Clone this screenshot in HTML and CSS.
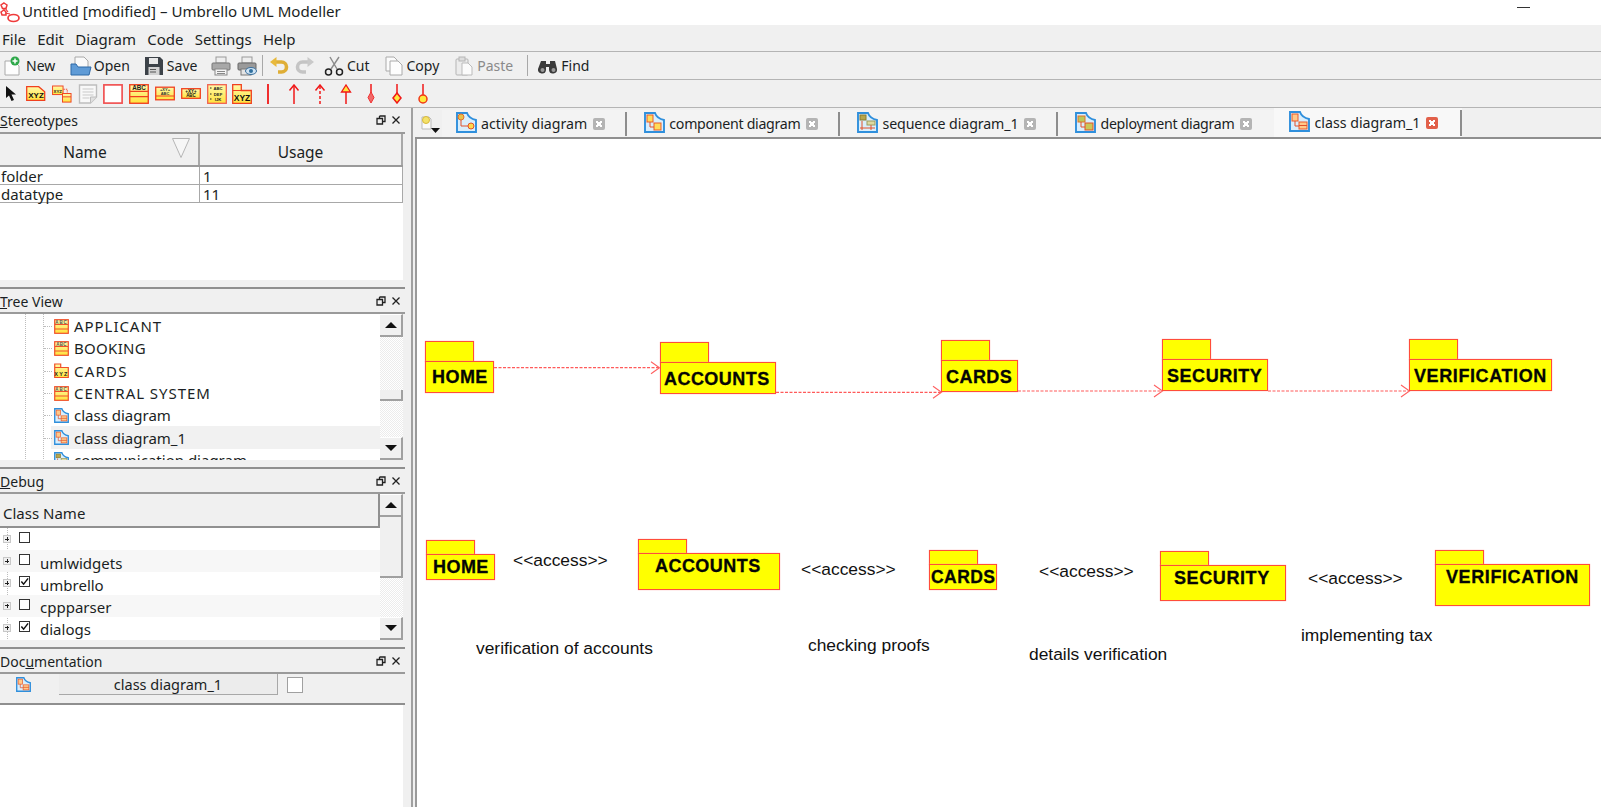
FILE: index.html
```html
<!DOCTYPE html>
<html lang="en">
<head>
<meta charset="utf-8">
<title>Untitled [modified] – Umbrello UML Modeller</title>
<link rel="stylesheet" href="styles.css">
</head>
<body>
<svg class="defs" width="0" height="0" aria-hidden="true">
  <defs>
    <linearGradient id="yl" x1="0" y1="0" x2="0" y2="1"><stop offset="0" stop-color="#fff9a8"/><stop offset="1" stop-color="#ffe23c"/></linearGradient>
    <symbol id="d-base" viewBox="0 0 21 21"><path d="M1 1h10c1 3 4 6 9 7v12H1z" fill="#d9eefc" stroke="#2f8fdc" stroke-width="1.9"/></symbol>
    <symbol id="d-activity" viewBox="0 0 21 21"><use href="#d-base" width="21" height="21"/><circle cx="5" cy="5" r="3" fill="#e8c24a" stroke="#e2702a"/><path d="M5 8v6h7" fill="none" stroke="#e2502a"/><circle cx="15" cy="14" r="3" fill="#ffd94a" stroke="#e2502a"/></symbol>
    <symbol id="d-component" viewBox="0 0 21 21"><use href="#d-base" width="21" height="21"/><rect x="3" y="3" width="6" height="7" fill="#ffdc5a" stroke="#ea5a2a"/><rect x="10" y="11" width="7" height="7" fill="#ffdc5a" stroke="#ea5a2a"/><path d="M6 10v5h4" fill="none" stroke="#e2502a"/></symbol>
    <symbol id="d-sequence" viewBox="0 0 21 21"><use href="#d-base" width="21" height="21"/><rect x="3" y="3" width="6" height="5" fill="#b7a64a" stroke="#8a7a30"/><rect x="10" y="9" width="8" height="4" fill="#dcd9a0" stroke="#9a9a60"/><path d="M3 16h15M5 9v9M14 13v5" stroke="#e2502a" fill="none"/></symbol>
    <symbol id="d-deployment" viewBox="0 0 21 21"><use href="#d-base" width="21" height="21"/><rect x="3" y="4" width="7" height="6" fill="#b9c85a" stroke="#e2702a"/><rect x="10" y="11" width="8" height="7" fill="#c9c85a" stroke="#e2502a"/><path d="M6 10v5h4" fill="none" stroke="#e2502a"/></symbol>
    <symbol id="d-class" viewBox="0 0 21 21"><use href="#d-base" width="21" height="21"/><rect x="3" y="3" width="6" height="7" fill="#ffc98a" stroke="#ea5a2a"/><rect x="10" y="11" width="8" height="7" fill="#ffc98a" stroke="#ea5a2a"/><path d="M10 14.5h8M6 10v5h4" fill="none" stroke="#e2502a"/></symbol>
    <symbol id="c-class" viewBox="0 0 15 15"><rect x=".7" y=".7" width="13.6" height="13.6" fill="url(#yl)" stroke="#f0502a" stroke-width="1.2"/><path d="M1 5.5h13M1 10h13" stroke="#f0502a"/><text x="7.5" y="4.7" font-size="4.5" font-family="Liberation Sans" font-weight="700" text-anchor="middle" fill="#555">ABC</text></symbol>
    <symbol id="c-pkg" viewBox="0 0 15 15"><path d="M.7 1h6v3.5h7.6v10H.7z" fill="url(#yl)" stroke="#f0502a" stroke-width="1.2"/><path d="M1 4.5h6" stroke="#f0502a"/><text x="7.5" y="12.5" font-size="5.5" font-family="Liberation Sans" font-weight="700" text-anchor="middle" fill="#222">XYZ</text></symbol>
    <symbol id="float" viewBox="0 0 10 10"><path d="M3.5 1h5.5v5.5h-2M1 3.5h5.5v5.5h-5.500z M3.500 1v2.500" fill="none" stroke="#222" stroke-width="1.300"/></symbol>
    <symbol id="close" viewBox="0 0 10 10"><path d="M1.500 1.500l7 7M8.500 1.500l-7 7" stroke="#222" stroke-width="1.300"/></symbol>
  </defs>
</svg>

<header class="titlebar">
  <svg class="app-icon" viewBox="0 0 20 21"><path d="M4 1l3 2-1 3.500H2.500L1 3z M1 10l3-2 2 2v3H2z" fill="#fff" stroke="#ef3b3b" stroke-width="1.500"/><path d="M5 6l3 4M5 11l5 1" stroke="#ef3b3b" stroke-width="1.200"/><ellipse cx="13.500" cy="16" rx="5.500" ry="3.500" fill="#fff" stroke="#ef3b3b" stroke-width="1.700"/></svg>
  <span class="title-text">Untitled [modified] – Umbrello UML Modeller</span>
  <span class="win-min"></span>
</header>

<nav class="menubar">
  <span>File</span><span>Edit</span><span>Diagram</span><span>Code</span><span>Settings</span><span>Help</span>
</nav>

<div class="toolbar t1">
  <div class="tbtn"><svg class="ico" viewBox="0 0 20 20"><path d="M2 5h9l5 5v9H2z" fill="#fdfdfd" stroke="#aaa"/><circle cx="12" cy="5" r="4.500" fill="#2ea84a"/><path d="M12 2.500v5M9.500 5h5" stroke="#fff" stroke-width="1.500"/></svg><span>New</span></div>
  <div class="tbtn b-open"><svg class="ico ico-w" viewBox="0 0 22 20"><path d="M5 1h9l4 4v7H5z" fill="#fafafa" stroke="#a8a8a8"/><path d="M1 8h5l2 3h13l-2 8H1z" fill="#5f9bd6" stroke="#2f6aa8"/></svg><span>Open</span></div>
  <div class="tbtn b-save"><svg class="ico" viewBox="0 0 20 20"><path d="M1 1h15l3 3v15H1z" fill="#3c4248"/><rect x="5" y="2" width="9" height="6" fill="#e8e8e8"/><rect x="4.500" y="11" width="11" height="8" fill="#d2d2d2"/><rect x="6" y="13" width="6" height="1" fill="#555"/><rect x="6" y="15.500" width="6" height="1" fill="#555"/></svg><span>Save</span></div>
  <div class="tbtn solo"><svg class="ico" viewBox="0 0 20 20"><rect x="5" y="1" width="10" height="6" fill="#eee" stroke="#999"/><rect x="1" y="7" width="18" height="7" rx="1" fill="#a8a8a8" stroke="#777"/><rect x="4" y="13" width="12" height="6" fill="#f4f4f4" stroke="#888"/><path d="M6 15.500h8M6 17.500h8" stroke="#888"/></svg></div>
  <div class="tbtn solo last"><svg class="ico" viewBox="0 0 20 20"><rect x="5" y="1" width="10" height="6" fill="#eee" stroke="#999"/><rect x="1" y="7" width="18" height="7" rx="1" fill="#9a9a9a" stroke="#666"/><rect x="4" y="13" width="10" height="6" fill="#e4e4e4" stroke="#777"/><ellipse cx="14" cy="15" rx="5.500" ry="3.500" fill="#cfe3f3" stroke="#3a6f9c"/><circle cx="14" cy="15" r="2" fill="#2f6f9f"/></svg></div>
  <span class="tsep"></span>
  <div class="tbtn solo"><svg class="ico" viewBox="0 0 20 20"><path d="M5 6h7.500a5 5 0 0 1 0 10H9" fill="none" stroke="#dfae36" stroke-width="3.600"/><path d="M7.500 1L1 6l6.500 5z" fill="#e8b93c"/></svg></div>
  <div class="tbtn solo gapcut"><svg class="ico" viewBox="0 0 20 20"><path d="M15 6H7.500a5 5 0 0 0 0 10H11" fill="none" stroke="#c4c4c4" stroke-width="3.600"/><path d="M12.500 1L19 6l-6.500 5z" fill="#c9c9c9"/></svg></div>
  <div class="tbtn b-cut"><svg class="ico" viewBox="0 0 20 20"><path d="M6 1l7 12M15 1L7 13" stroke="#8a8a8a" stroke-width="1.400" fill="none"/><circle cx="4.500" cy="16" r="3" fill="none" stroke="#222" stroke-width="1.500"/><circle cx="15.500" cy="16" r="3" fill="none" stroke="#222" stroke-width="1.500"/></svg><span>Cut</span></div>
  <div class="tbtn"><svg class="ico ico-n" viewBox="0 0 18 20"><path d="M1 1h8l3 3v11H1z" fill="#fbfbfb" stroke="#aaa"/><path d="M5 5h8l4 4v10H5z" fill="#fdfdfd" stroke="#aaa"/></svg><span>Copy</span></div>
  <div class="tbtn off"><svg class="ico" viewBox="0 0 20 20"><rect x="2" y="3" width="12" height="16" rx="1" fill="#ececec" stroke="#b5b5b5"/><rect x="5" y="1" width="6" height="4" fill="#ddd" stroke="#b5b5b5"/><path d="M8 7h6l4 4v8H8z" fill="#fbfbfb" stroke="#bbb"/></svg><span>Paste</span></div>
  <span class="tsep sep-find"></span>
  <div class="tbtn"><svg class="ico" viewBox="0 0 20 20"><path d="M3 5h5v3h4V5h5l2 8a4 4 0 1 1-8 1v-3H8v3a4 4 0 1 1-8-1z" fill="#3a3a3a"/><circle cx="4.500" cy="14" r="2" fill="#9a9a9a"/><circle cx="15.500" cy="14" r="2" fill="#9a9a9a"/></svg><span>Find</span></div>
</div>

<div class="toolbar t2">
  <span class="tool tool-first"><svg class="sel" viewBox="0 0 11 16"><path d="M1 0v12l3-2.500L6.500 15l2.500-1-2.500-5.500H11z" fill="#111"/></svg></span>
  <span class="tool"><svg class="ti" viewBox="0 0 20 15"><path d="M.7.700h12l6 5v8.600H.7z" fill="url(#yl)" stroke="#f0401f" stroke-width="1.300"/><text x="10" y="12" font-size="8" font-family="Liberation Sans" font-weight="700" text-anchor="middle" fill="#111">XYZ</text></svg></span>
  <span class="tool"><svg class="ti ti-t" viewBox="0 0 21 18"><rect x=".6" y=".6" width="11" height="9" fill="url(#yl)" stroke="#f0401f"/><text x="6" y="7.500" font-size="4.500" font-family="Liberation Sans" font-weight="700" text-anchor="middle" fill="#222">XYZ</text><path d="M12 4h4v4" fill="none" stroke="#f0401f" stroke-dasharray="1.500 1"/><rect x="11" y="8.500" width="9" height="9" fill="url(#yl)" stroke="#f0401f"/><path d="M11 12h9" stroke="#f0401f"/></svg></span>
  <span class="tool"><svg class="ti ti-t" viewBox="0 0 19 20"><path d="M1 1h17v12l-6 6H1z" fill="#f8f8f8" stroke="#bdbdbd" stroke-width="1.400"/><path d="M4 5h11M4 8h11M4 11h11M4 14h7" stroke="#c9c9c9"/><path d="M12 19v-6h6" fill="#e0e0e0" stroke="#bdbdbd"/></svg></span>
  <span class="tool"><svg class="ti ti-t" viewBox="0 0 18 18"><rect x=".8" y=".8" width="16.400" height="16.400" fill="#fff" stroke="#f05050" stroke-width="1.500"/></svg></span>
  <span class="tool"><svg class="ti ti-t" viewBox="0 0 19 19"><rect x=".7" y=".7" width="17.600" height="17.600" fill="url(#yl)" stroke="#f0401f" stroke-width="1.300"/><path d="M1 7h17M1 12h17" stroke="#f0401f"/><text x="9.500" y="6" font-size="6" font-family="Liberation Sans" font-weight="700" text-anchor="middle" fill="#222">ABC</text></svg></span>
  <span class="tool"><svg class="ti" viewBox="0 0 20 14"><rect x=".7" y=".7" width="18.600" height="12.600" fill="url(#yl)" stroke="#f0401f" stroke-width="1.300"/><path d="M1 9.500h18" stroke="#f0401f"/><text x="10" y="4.500" font-size="4" font-family="Liberation Sans" font-weight="700" text-anchor="middle" fill="#333">+XY+</text><text x="10" y="8.500" font-size="4" font-family="Liberation Sans" font-weight="700" text-anchor="middle" fill="#333">ABC</text></svg></span>
  <span class="tool"><svg class="ti ti-s" viewBox="0 0 20 11"><rect x=".7" y=".7" width="18.600" height="9.600" fill="url(#yl)" stroke="#f0401f" stroke-width="1.300"/><text x="10" y="4.800" font-size="4.500" font-family="Liberation Sans" font-weight="700" text-anchor="middle" fill="#111">+XY+</text><text x="10" y="9.300" font-size="4.500" font-family="Liberation Sans" font-weight="700" text-anchor="middle" fill="#111">ABC</text></svg></span>
  <span class="tool"><svg class="ti ti-t" viewBox="0 0 20 20"><rect x=".7" y=".7" width="18.600" height="18.600" fill="url(#yl)" stroke="#f0604f" stroke-width="1.300"/><text x="11" y="6" font-size="4.200" font-family="Liberation Sans" font-weight="700" text-anchor="middle" fill="#222">ABC</text><text x="11" y="11.500" font-size="4.200" font-family="Liberation Sans" font-weight="700" text-anchor="middle" fill="#222">DEF</text><text x="11" y="17" font-size="4.200" font-family="Liberation Sans" font-weight="700" text-anchor="middle" fill="#222">IJK</text><path d="M3 4h1.500M3 10h1.500M3 15h1.500" stroke="#222"/></svg></span>
  <span class="tool"><svg class="ti ti-t" viewBox="0 0 20 20"><path d="M.7.700h8.600v5.800h10v13H.7z" fill="url(#yl)" stroke="#f0401f" stroke-width="1.300"/><path d="M1 6.500h8" stroke="#f0401f"/><text x="10" y="16.500" font-size="8.500" font-family="Liberation Sans" font-weight="700" text-anchor="middle" fill="#111">XYZ</text></svg></span>
  <span class="tool"><svg class="ra" viewBox="0 0 14 20"><path d="M7 0v20" stroke="#f01818" stroke-width="1.800"/></svg></span>
  <span class="tool"><svg class="ra" viewBox="0 0 14 20"><path d="M7 2v18" stroke="#f01818" stroke-width="1.500"/><path d="M2.500 6.500L7 1l4.500 5.500" fill="none" stroke="#f01818" stroke-width="1.500"/></svg></span>
  <span class="tool"><svg class="ra" viewBox="0 0 14 20"><path d="M7 2v18" stroke="#f01818" stroke-width="1.500" stroke-dasharray="3 2"/><path d="M2.500 6.500L7 1l4.500 5.500" fill="none" stroke="#f01818" stroke-width="1.500"/></svg></span>
  <span class="tool"><svg class="ra" viewBox="0 0 14 20"><path d="M7 8v12" stroke="#f01818" stroke-width="1.500"/><path d="M2.500 8L7 1l4.500 7z" fill="#ffe93c" stroke="#f01818" stroke-width="1.300"/></svg></span>
  <span class="tool"><svg class="ra" viewBox="0 0 14 20"><path d="M7 0v9" stroke="#f01818" stroke-width="1.500"/><path d="M7 8l3 5.500-3 5.500-3-5.500z" fill="#f06a6a" stroke="#f03030"/></svg></span>
  <span class="tool"><svg class="ra" viewBox="0 0 14 20"><path d="M7 0v9" stroke="#f01818" stroke-width="1.500"/><path d="M7 9l4 5-4 5-4-5z" fill="#ffe93c" stroke="#f01818" stroke-width="1.500"/></svg></span>
  <span class="tool"><svg class="ra" viewBox="0 0 14 20"><path d="M7 0v11" stroke="#f01818" stroke-width="1.500"/><circle cx="7" cy="15" r="4" fill="#ffe93c" stroke="#f03818" stroke-width="1.500"/></svg></span>
</div>

<main class="main">
  <aside class="sidebar">
    <section class="dock dock-stereo">
      <div class="dock-head head-tall"><span><u>S</u>tereotypes</span><span class="dock-btns"><svg><use href="#float"/></svg><svg><use href="#close"/></svg></span></div>
      <div class="stereo-body">
        <div class="st-head"><div class="st-h st-name">Name<svg class="sort" viewBox="0 0 18 20"><path d="M.5.500h17L9 19.500z" fill="#f6f6f6" stroke="#b5b5b5"/></svg></div><div class="st-h st-usage">Usage</div></div>
        <div class="st-row"><div class="st-c1">folder</div><div class="st-c2">1</div></div>
        <div class="st-row"><div class="st-c1">datatype</div><div class="st-c2">11</div></div>
      </div>
    </section>

    <section class="dock dock-tree">
      <div class="dock-head"><span><u>T</u>ree View</span><span class="dock-btns"><svg><use href="#float"/></svg><svg><use href="#close"/></svg></span></div>
      <div class="list-wrap">
        <div class="tree-list">
          <div class="tree-row caps"><svg class="ci"><use href="#c-class"/></svg>APPLICANT</div>
          <div class="tree-row caps-s"><svg class="ci"><use href="#c-class"/></svg>BOOKING</div>
          <div class="tree-row caps-l"><svg class="ci"><use href="#c-pkg"/></svg>CARDS</div>
          <div class="tree-row caps"><svg class="ci"><use href="#c-class"/></svg>CENTRAL SYSTEM</div>
          <div class="tree-row"><svg class="ci"><use href="#d-class"/></svg>class diagram</div>
          <div class="tree-row on"><svg class="ci"><use href="#d-class"/></svg>class diagram_1</div>
          <div class="tree-row"><svg class="ci"><use href="#d-sequence"/></svg>communication diagram</div>
        </div>
        <div class="vscroll">
          <div class="sb-btn"><i class="up"></i></div>
          <div class="sb-track"><div class="sb-gap g-tree"></div><div class="sb-thumb th-tree"></div><div class="sb-gap g-tree2"></div></div>
          <div class="sb-btn"><i class="down"></i></div>
        </div>
      </div>
    </section>

    <section class="dock dock-debug">
      <div class="dock-head"><span><u>D</u>ebug</span><span class="dock-btns"><svg><use href="#float"/></svg><svg><use href="#close"/></svg></span></div>
      <div class="list-wrap">
        <div class="debug-list">
          <div class="debug-head">Class Name</div>
          <div class="debug-row"><i class="exp"></i><i class="cb"></i></div>
          <div class="debug-row alt"><i class="exp"></i><i class="cb"></i><span>umlwidgets</span></div>
          <div class="debug-row"><i class="exp"></i><i class="cb"><svg viewBox="0 0 10 10"><path d="M1.500 5l2.500 3 5-6.500" fill="none" stroke="#111" stroke-width="1.600"/></svg></i><span>umbrello</span></div>
          <div class="debug-row alt"><i class="exp"></i><i class="cb"></i><span>cppparser</span></div>
          <div class="debug-row"><i class="exp"></i><i class="cb"><svg viewBox="0 0 10 10"><path d="M1.500 5l2.500 3 5-6.500" fill="none" stroke="#111" stroke-width="1.600"/></svg></i><span>dialogs</span></div>
        </div>
        <div class="vscroll vscroll-debug">
          <div class="sb-btn"><i class="up"></i></div>
          <div class="sb-track"><div class="sb-thumb th-debug"></div><div class="sb-gap g-debug"></div></div>
          <div class="sb-btn"><i class="down"></i></div>
        </div>
      </div>
    </section>

    <section class="dock dock-doc">
      <div class="dock-head"><span>Doc<u>u</u>mentation</span><span class="dock-btns"><svg><use href="#float"/></svg><svg><use href="#close"/></svg></span></div>
      <div class="doc-row"><svg class="ci doc-ic"><use href="#d-class"/></svg><div class="doc-btn">class diagram_1</div><i class="doc-cb"></i></div>
    </section>
    <div class="doc-fill"></div>
  </aside>

  <section class="workspace">
    <div class="tabstrip">
      <div class="tab-menu"><svg viewBox="0 0 20 20"><path d="M1 3h7l2 2v10H1z" fill="#fafafa" stroke="#bbb"/><circle cx="5" cy="6" r="3.500" fill="#f4e26a" stroke="#d8b83a"/><path d="M10 14h9l-4.500 5z" fill="#111"/></svg></div>
      <div class="tab tab-first"><svg class="ti-d"><use href="#d-activity"/></svg><span>activity diagram</span><i class="tab-x"></i></div>
      <div class="tab tight"><svg class="ti-d"><use href="#d-component"/></svg><span>component diagram</span><i class="tab-x"></i></div>
      <div class="tab snug"><svg class="ti-d"><use href="#d-sequence"/></svg><span>sequence diagram_1</span><i class="tab-x"></i></div>
      <div class="tab tab-nosep tight"><svg class="ti-d"><use href="#d-deployment"/></svg><span>deployment diagram</span><i class="tab-x"></i></div>
      <div class="tab tab-active"><svg class="ti-d"><use href="#d-class"/></svg><span>class diagram_1</span><i class="tab-x"></i></div>
    </div>
    <div class="canvas">
      <svg class="links" viewBox="0 0 1184 668">
        <g class="dash">
          <path d="M77 228.700H242"/>
          <path d="M359 253.300H524"/>
          <path d="M601 252H745"/>
          <path d="M851 252H992"/>
        </g>
        <g class="head">
          <path d="M234 222.700l8.500 6-8.500 6"/>
          <path d="M516 247.300l8.500 6-8.500 6"/>
          <path d="M737 246l8.500 6-8.500 6"/>
          <path d="M984 246l8.500 6-8.500 6"/>
        </g>
      </svg>

      <div class="pkg p1"><div class="pkg-tab"></div><div class="pkg-body"><span>HOME</span></div></div>
      <div class="pkg p2"><div class="pkg-tab"></div><div class="pkg-body"><span>ACCOUNTS</span></div></div>
      <div class="pkg p3"><div class="pkg-tab"></div><div class="pkg-body"><span>CARDS</span></div></div>
      <div class="pkg p4"><div class="pkg-tab"></div><div class="pkg-body"><span>SECURITY</span></div></div>
      <div class="pkg p5"><div class="pkg-tab"></div><div class="pkg-body"><span>VERIFICATION</span></div></div>

      <div class="pkg q1"><div class="pkg-tab tab-low"></div><div class="pkg-body"><span>HOME</span></div></div>
      <div class="pkg q2"><div class="pkg-tab tab-low"></div><div class="pkg-body"><span>ACCOUNTS</span></div></div>
      <div class="pkg q3"><div class="pkg-tab tab-low"></div><div class="pkg-body"><span>CARDS</span></div></div>
      <div class="pkg q4"><div class="pkg-tab tab-low"></div><div class="pkg-body"><span>SECURITY</span></div></div>
      <div class="pkg q5"><div class="pkg-tab tab-low"></div><div class="pkg-body"><span>VERIFICATION</span></div></div>

      <span class="lbl a1">&lt;&lt;access&gt;&gt;</span>
      <span class="lbl a2">&lt;&lt;access&gt;&gt;</span>
      <span class="lbl a3">&lt;&lt;access&gt;&gt;</span>
      <span class="lbl a4">&lt;&lt;access&gt;&gt;</span>
      <span class="lbl b1">verification of accounts</span>
      <span class="lbl b2">checking proofs</span>
      <span class="lbl b3">details verification</span>
      <span class="lbl b4">implementing tax</span>
    </div>
  </section>
</main>
</body>
</html>
```
FILE: styles.css
```css
* { box-sizing: border-box; }
html, body { margin: 0; padding: 0; }
body {
  width: 1601px;
  height: 807px;
  overflow: hidden;
  display: flex;
  flex-direction: column;
  background: #f0f0f0;
  color: #1b1f24;
  font-family: "Noto Sans", "Open Sans", sans-serif;
  font-size: 14.5px;
}
.defs { position: absolute; }
i { display: block; font-style: normal; }

.titlebar {
  height: 25px;
  flex: none;
  display: flex;
  align-items: center;
  background: #fff;
}
.app-icon { width: 20px; height: 21px; flex: none; margin-right: 2px; }
.title-text { font-size: 15.1px; margin-top: -3px; }
.win-min {
  width: 13px;
  height: 1px;
  background: #333;
  margin: 0 71px 11px auto;
}

.menubar {
  height: 27px;
  flex: none;
  display: flex;
  align-items: center;
  padding: 2px 0 0 2px;
  gap: 11.2px;
  border-bottom: 1px solid #b4b4b4;
  font-size: 15px;
}

.toolbar {
  flex: none;
  display: flex;
  align-items: center;
  border-bottom: 1px solid #b4b4b4;
}
.t1 { height: 28px; padding-left: 3px; font-size: 14px; }
.t2 { height: 28px; }

.tbtn { display: flex; align-items: center; gap: 3px; margin-right: 15px; }
.tbtn.b-open { gap: 1.5px; margin-right: 14px; }
.tbtn.b-save { margin-right: 13.5px; }
.tbtn.b-cut { margin-right: 16px; }
.tbtn.solo { margin-right: 6px; }
.tbtn.last { margin-right: 5px; }
.tbtn.gapcut { margin-right: 9px; }
.tbtn.off { color: #8a8a8a; }
.ico { width: 20px; height: 20px; flex: none; }
.ico-w { width: 22px; }
.ico-n { width: 18px; }
.tsep { width: 1px; height: 21px; background: #a8a8a8; margin-right: 6px; flex: none; }
.sep-find { margin-left: -1px; margin-right: 10px; }

.tool {
  width: 25.8px;
  flex: none;
  display: flex;
  justify-content: center;
  align-items: center;
  height: 20px;
}
.tool-first { width: 23.2px; justify-content: flex-start; padding-left: 5px; }
.sel { width: 11px; height: 16px; }
.ti { width: 20px; height: 15px; }
.ti-t { width: 20px; height: 20px; }
.ti-s { width: 20px; height: 11px; }
.ra { width: 14px; height: 20px; }

.main { flex: 1; display: flex; min-height: 0; }

.sidebar {
  width: 405px;
  flex: none;
  display: flex;
  flex-direction: column;
}
.dock { display: flex; flex-direction: column; flex: none; border-bottom: 2px solid #8f8f8f; }
.dock-stereo { height: 181px; padding-bottom: 7px; }
.dock-tree { height: 180px; padding-bottom: 7px; }
.dock-debug { height: 180px; padding-bottom: 7px; }
.dock-doc { height: 56px; }
.doc-fill { flex: 1; width: 403px; background: #fff; }

.dock-head {
  height: 25px;
  flex: none;
  display: flex;
  align-items: center;
  justify-content: space-between;
  padding: 1px 4px 0 0;
  border-bottom: 2px solid #9a9a9a;
  font-size: 14px;
}
.head-tall { height: 26px; padding-top: 0; }
.dock-btns { display: flex; gap: 5px; }
.dock-btns svg { width: 10px; height: 10px; }

.stereo-body { flex: 1; width: 403px; background: #fff; }
.st-head { height: 33px; display: flex; border-bottom: 2px solid #9a9a9a; }
.st-h {
  display: flex;
  align-items: center;
  justify-content: center;
  position: relative;
  padding-top: 5px;
  background: #f0f0f0;
  font-size: 15.5px;
}
.st-name { width: 200px; padding-right: 28px; border-right: 2px solid #a8a8a8; }
.st-usage { flex: 1; border-right: 2px solid #a8a8a8; }
.sort { position: absolute; top: 4px; right: 8px; width: 18px; height: 20px; }
.st-row { height: 18px; display: flex; border-bottom: 1px solid #a8a8a8; border-right: 1px solid #a8a8a8; font-size: 15px; line-height: 19px; }
.st-c1 { width: 200px; padding-left: 1px; border-right: 1px solid #a8a8a8; }
.st-c2 { padding-left: 3px; }

.list-wrap { flex: 1; display: flex; width: 403px; background: #fff; min-height: 0; }
.tree-list {
  flex: 1;
  overflow: hidden;
  padding-top: 1px;
  background-image:
    repeating-linear-gradient(#bdbdbd 0 1px, transparent 1px 2px),
    repeating-linear-gradient(#bdbdbd 0 1px, transparent 1px 2px);
  background-size: 1px 100%, 1px 100%;
  background-position: 25px 0, 43px 0;
  background-repeat: no-repeat;
}
.tree-row {
  height: 22.3px;
  margin-left: 51px;
  display: flex;
  align-items: center;
  gap: 5px;
  padding-left: 3px;
  font-size: 15px;
  position: relative;
}
.tree-row.caps { letter-spacing: .95px; }
.tree-row.caps-s { letter-spacing: .3px; }
.tree-row.caps-l { letter-spacing: 1.200px; }
.tree-row::before {
  content: "";
  position: absolute;
  left: -7px;
  top: 50%;
  width: 8px;
  border-top: 1px dotted #bdbdbd;
}
.tree-row.on { background: #f1f1f1; }
.ci { width: 15px; height: 15px; flex: none; }

.vscroll { width: 23px; flex: none; display: flex; flex-direction: column; }
.sb-btn {
  height: 23px;
  flex: none;
  display: flex;
  align-items: center;
  justify-content: center;
  background: #f0f0f0;
  border-right: 2px solid #a0a0a0;
  border-bottom: 2px solid #a0a0a0;
  border-top: 1px solid #fff;
}
.sb-btn i { width: 0; height: 0; border-left: 6px solid transparent; border-right: 6px solid transparent; }
.sb-btn .up { border-bottom: 6px solid #111; }
.sb-btn .down { border-top: 6px solid #111; }
.sb-track { flex: 1; display: flex; flex-direction: column; min-height: 0; }
.sb-gap { background: repeating-conic-gradient(#ececec 0 25%, #fff 0 50%) 0 0 / 2px 2px; }
.g-tree { height: 53px; }
.th-tree { height: 11px; }
.g-tree2 { flex: 1; }
.sb-thumb { background: #f0f0f0; border-right: 2px solid #a0a0a0; border-bottom: 2px solid #a0a0a0; }
.th-debug { height: 61px; }
.g-debug { flex: 1; }

.debug-list {
  flex: 1;
  min-width: 0;
  background-image: repeating-linear-gradient(#bdbdbd 0 1px, transparent 1px 2px);
  background-size: 1px 100%;
  background-position: 7px 0;
  background-repeat: no-repeat;
}
.debug-head {
  height: 34px;
  display: flex;
  align-items: center;
  padding: 5px 0 0 3px;
  background: #f0f0f0;
  border-right: 2px solid #909090;
  border-bottom: 2px solid #909090;
  font-size: 15px;
}
.debug-row {
  height: 22.2px;
  display: flex;
  align-items: center;
  padding-left: 3px;
  font-size: 15px;
}
.debug-row span { margin-top: 3px; }
.debug-row.alt { background: #f7f7f7; }
.exp {
  width: 8px;
  height: 8px;
  flex: none;
  border: 1px solid #c8c8c8;
  background:
    linear-gradient(#222, #222) center / 4px 1px no-repeat,
    linear-gradient(#222, #222) center / 1px 4px no-repeat,
    #f0f0f0;
}
.cb {
  width: 11px;
  height: 11px;
  flex: none;
  margin: 0 10px 3px 8px;
  background: #fff;
  border: 1px solid #333;
}
.cb svg { display: block; width: 9px; height: 9px; }

.doc-row { flex: 1; display: flex; align-items: flex-start; padding-left: 16px; }
.doc-ic { margin: 3px 28px 0 0; }
.doc-btn {
  width: 219px;
  height: 21px;
  display: flex;
  align-items: center;
  justify-content: center;
  background: #ececec;
  border-right: 1px solid #a8a8a8;
  border-bottom: 1px solid #a8a8a8;
  font-size: 14.5px;
}
.doc-cb { width: 16px; height: 16px; margin: 3px 0 0 9px; background: #fff; border: 1px solid #a0a0a0; }

.workspace {
  flex: 1;
  min-width: 0;
  display: flex;
  flex-direction: column;
  margin-left: 6px;
  border-left: 2px solid #a0a0a0;
}
.tabstrip { height: 31px; flex: none; display: flex; margin-left: 2px; border-bottom: 2px solid #8f8f8f; align-items: flex-end; }
.tab-menu { width: 27px; height: 28px; flex: none; padding: 5px 0 0 6px; align-self: center; }
.tab-menu svg { width: 20px; height: 20px; display: block; }
.tab {
  height: 27px;
  display: flex;
  align-items: center;
  padding: 0 22px 0 17px;
  background: #f3f3f3;
  position: relative;
  font-size: 14.2px;
}
.tab.tight { letter-spacing: -.3px; }
.tab.snug { letter-spacing: -.1px; }
.tab::after {
  content: "";
  position: absolute;
  right: 0;
  top: 2px;
  bottom: 1px;
  width: 2px;
  background: #8d8d8d;
}
.tab-nosep::after { display: none; }
.tab-first { padding-left: 14px; }
.tab-active { height: 29px; background: #f8f8f8; padding: 0 24px 0 15px; }
.ti-d { width: 21px; height: 21px; flex: none; margin: 0 4px 2px 0; }
.tab-x {
  width: 12px;
  height: 12px;
  flex: none;
  margin-left: 6px;
  border-radius: 2px;
  background:
    linear-gradient(45deg, transparent 38%, #fff 38% 62%, transparent 62%) center / 6px 6px no-repeat,
    linear-gradient(-45deg, transparent 38%, #fff 38% 62%, transparent 62%) center / 6px 6px no-repeat,
    #b4b4b4;
}
.tab-active .tab-x {
  background:
    linear-gradient(45deg, transparent 38%, #fff 38% 62%, transparent 62%) center / 6px 6px no-repeat,
    linear-gradient(-45deg, transparent 38%, #fff 38% 62%, transparent 62%) center / 6px 6px no-repeat,
    #e2604a;
}

.canvas {
  flex: 1;
  position: relative;
  overflow: hidden;
  margin-left: 2px;
  background: #fff;
  border-left: 2px solid #9a9a9a;
}
.links { position: absolute; left: 0; top: 0; width: 1184px; height: 668px; }
.dash path { fill: none; stroke: #ff5a5a; stroke-width: 1.200; stroke-dasharray: 3 1.500; }
.head path { fill: none; stroke: #ff6060; stroke-width: 1.100; }

.pkg { position: absolute; display: flex; flex-direction: column; }
.pkg-tab {
  flex: none;
  width: 49px;
  height: 21px;
  margin-bottom: -1px;
  background: #ffff00;
  border: 1px solid #ff4d3a;
  box-shadow: 0 0 1px #ff9a9a;
}
.tab-low { height: 15px; }
.pkg-body {
  flex: 1;
  background: #ffff00;
  border: 1px solid #ff4d3a;
  box-shadow: 0 0 1px #ff9a9a;
  font-family: "Liberation Sans", Arial, sans-serif;
  font-weight: 700;
  font-size: 18px;
  line-height: 24px;
  letter-spacing: .45px;
  color: #050505;
  -webkit-text-stroke: .3px #050505;
  white-space: nowrap;
  position: relative;
}
.p1 { left: 8px; top: 202px; width: 69px; height: 52px; }
.p1 .pkg-body { padding: 3px 0 0 6px; }
.p2 { left: 243px; top: 203px; width: 116px; height: 52px; }
.p2 .pkg-body { padding: 4px 0 0 3px; }
.p3 { left: 524px; top: 201px; width: 77px; height: 52px; }
.p3 .pkg-body { padding: 4px 0 0 4px; }
.p4 { left: 745px; top: 200px; width: 106px; height: 52px; }
.p4 .pkg-body { padding: 4px 0 0 4px; letter-spacing: .55px; }
.p5 { left: 992px; top: 200px; width: 143px; height: 52px; }
.p5 .pkg-body { padding: 4px 0 0 4px; letter-spacing: .6px; }
.q1 { left: 9px; top: 401px; width: 69px; height: 38px; }
.q1 .pkg-body { padding: 0 0 0 6px; }
.q2 { left: 221px; top: 400px; width: 142px; height: 51px; }
.q2 .pkg-body { padding: 0 0 0 16px; }
.q3 { left: 512px; top: 411px; width: 68px; height: 38px; }
.q3 .pkg-body { padding: 0 0 0 1px; font-size: 17.500px; }
.q4 { left: 743px; top: 412px; width: 126px; height: 50px; }
.q4 .pkg-body { padding: 0 0 0 13px; letter-spacing: .6px; }
.q5 { left: 1018px; top: 411px; width: 155px; height: 56px; }
.q5 .pkg-body { padding: 0 0 0 10px; letter-spacing: .6px; }

.lbl {
  position: absolute;
  font-family: "Liberation Sans", Arial, sans-serif;
  font-size: 17.4px;
  line-height: 20px;
  color: #111;
  white-space: nowrap;
}
.a1 { left: 96px; top: 411px; }
.a2 { left: 384px; top: 420px; }
.a3 { left: 622px; top: 422px; }
.a4 { left: 891px; top: 429px; }
.b1 { left: 59px; top: 499px; }
.b2 { left: 391px; top: 496px; }
.b3 { left: 612px; top: 505px; }
.b4 { left: 884px; top: 486px; }
```
